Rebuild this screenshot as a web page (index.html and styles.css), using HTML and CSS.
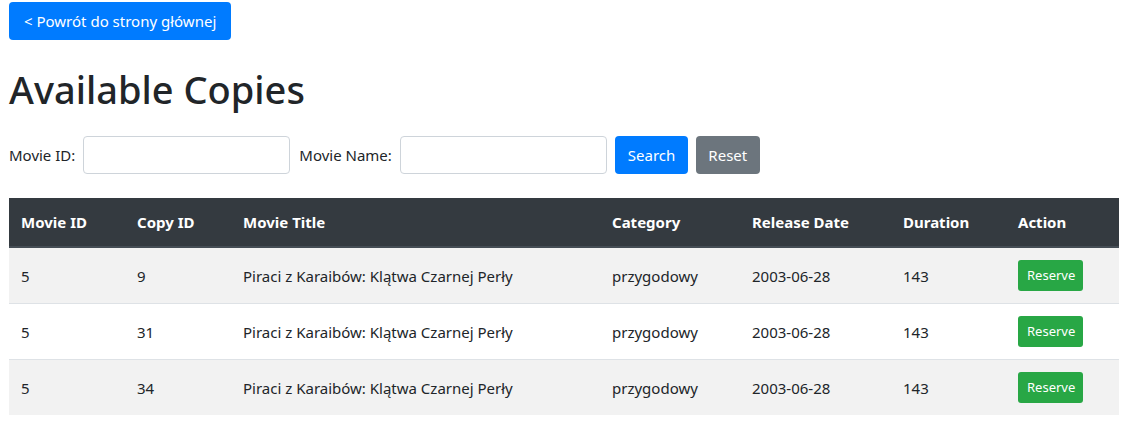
FILE: index.html
```html
<!DOCTYPE html>
<html lang="pl">
<head>
<meta charset="utf-8">
<title>Available Copies</title>
<link rel="stylesheet" href="styles.css">
</head>
<body>
<div class="page">
  <a class="btn btn-primary back" href="#">&lt; Powrót do strony głównej</a>
  <h1 class="title">Available Copies</h1>
  <form class="search">
    <label class="lbl" for="mid">Movie ID:</label>
    <input class="field" id="mid" type="text">
    <label class="lbl" for="mname">Movie Name:</label>
    <input class="field field-last" id="mname" type="text">
    <button class="btn btn-primary" type="button">Search</button>
    <button class="btn btn-secondary" type="button">Reset</button>
  </form>
  <table class="tbl">
    <thead>
      <tr>
        <th class="c1">Movie ID</th>
        <th class="c2">Copy ID</th>
        <th class="c3">Movie Title</th>
        <th class="c4">Category</th>
        <th class="c5">Release Date</th>
        <th class="c6">Duration</th>
        <th class="c7">Action</th>
      </tr>
    </thead>
    <tbody>
      <tr>
        <td>5</td><td>9</td><td>Piraci z Karaibów: Klątwa Czarnej Perły</td><td>przygodowy</td><td>2003-06-28</td><td>143</td>
        <td><button class="btn-sm" type="button">Reserve</button></td>
      </tr>
      <tr>
        <td>5</td><td>31</td><td>Piraci z Karaibów: Klątwa Czarnej Perły</td><td>przygodowy</td><td>2003-06-28</td><td>143</td>
        <td><button class="btn-sm" type="button">Reserve</button></td>
      </tr>
      <tr>
        <td>5</td><td>34</td><td>Piraci z Karaibów: Klątwa Czarnej Perły</td><td>przygodowy</td><td>2003-06-28</td><td>143</td>
        <td><button class="btn-sm" type="button">Reserve</button></td>
      </tr>
    </tbody>
  </table>
</div>
</body>
</html>
```

FILE: styles.css
```css
* { box-sizing: border-box; }
body {
  margin: 0;
  font-family: "Noto Sans", "Open Sans", sans-serif;
  font-size: 16px;
  line-height: 1.5;
  color: #212529;
  background: #fff;
}
.page {
  padding: 2px 8px 0 9px;
}
.btn {
  display: inline-block;
  height: 38px;
  padding: 0 13px;
  font-family: inherit;
  font-size: 15px;
  line-height: 38px;
  border: 0;
  border-radius: 4px;
  color: #fff;
  text-decoration: none;
  cursor: pointer;
}
.btn-primary { background: #007bff; }
.btn-secondary { background: #6c757d; }
.back { padding: 0 15px 0 15px; }
.title {
  margin: 25px 0 0;
  font-size: 38px;
  font-weight: 500;
  line-height: 48px;
}
.search {
  display: flex;
  align-items: center;
  margin: 23px 0 24px;
}
.lbl {
  font-size: 15px;
  margin-right: 8px;
}
.field {
  width: 207px;
  height: 38px;
  border: 1px solid #ced4da;
  border-radius: 4px;
  margin-right: 9px;
  font-family: inherit;
  font-size: 16px;
  padding: 6px 12px;
}
.field-last { margin-right: 8px; }
.search .btn { margin-right: 8px; }
.search .btn-primary { padding: 0 13px; }
.search .btn-secondary { padding: 0 13px 0 12px; }
.tbl {
  width: 1110px;
  border-collapse: collapse;
  table-layout: fixed;
  font-size: 15px;
}
.tbl th {
  background: #343a40;
  color: #fff;
  font-weight: 700;
  text-align: left;
  padding: 12px;
  line-height: 24px;
  border-bottom: 2px solid #454d55;
  vertical-align: middle;
}
.tbl td {
  padding: 12px;
  line-height: 24px;
  border-top: 1px solid #dee2e6;
  vertical-align: middle;
}
.tbl tbody tr:nth-child(odd) { background: #f2f2f2; }
.c1 { width: 116px; }
.c2 { width: 106px; }
.c3 { width: 369px; }
.c4 { width: 140px; }
.c5 { width: 151px; }
.c6 { width: 115px; }
.c7 { width: 113px; }
.btn-sm {
  display: inline-block;
  height: 31px;
  padding: 0 8px 0 9px;
  font-family: inherit;
  font-size: 13px;
  line-height: 31px;
  border: 0;
  border-radius: 3px;
  background: #28a745;
  color: #fff;
  vertical-align: middle;
}
```
